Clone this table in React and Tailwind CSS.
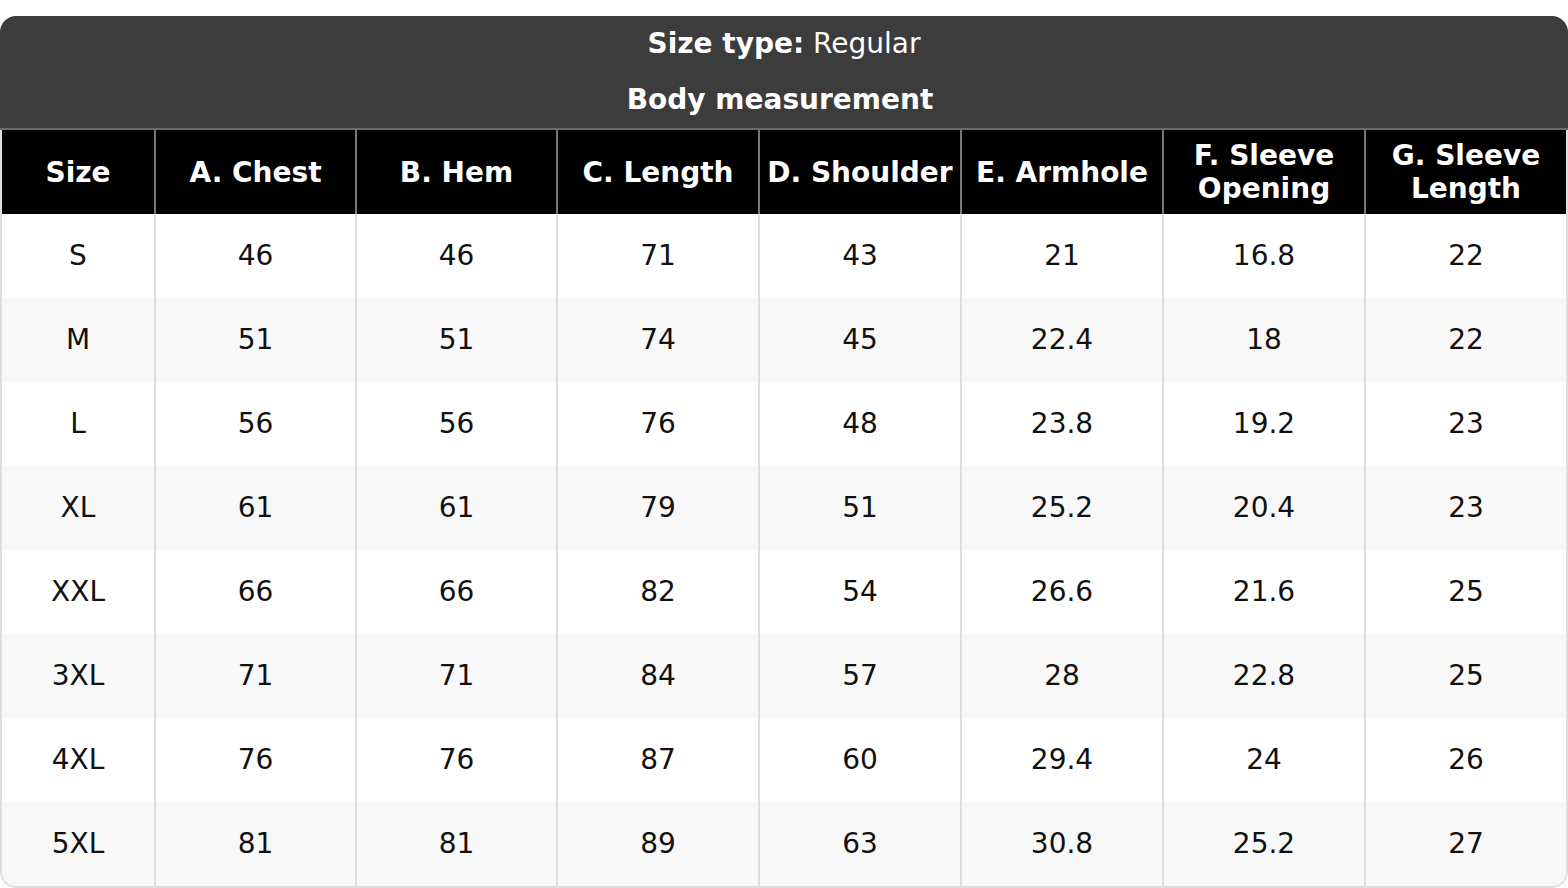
import React from "react";

const headers = [
  "Size",
  "A. Chest",
  "B. Hem",
  "C. Length",
  "D. Shoulder",
  "E. Armhole",
  ["F. Sleeve", "Opening"],
  ["G. Sleeve", "Length"],
];

const rows = [
  ["S", "46", "46", "71", "43", "21", "16.8", "22"],
  ["M", "51", "51", "74", "45", "22.4", "18", "22"],
  ["L", "56", "56", "76", "48", "23.8", "19.2", "23"],
  ["XL", "61", "61", "79", "51", "25.2", "20.4", "23"],
  ["XXL", "66", "66", "82", "54", "26.6", "21.6", "25"],
  ["3XL", "71", "71", "84", "57", "28", "22.8", "25"],
  ["4XL", "76", "76", "87", "60", "29.4", "24", "26"],
  ["5XL", "81", "81", "89", "63", "30.8", "25.2", "27"],
];

const grid = "grid grid-cols-[152px_201px_201px_202px_202px_202px_202px_1fr]";

export default function App() {
  return (
    <div className="w-[1568px] h-[888px] bg-white pt-[16px] font-['DejaVu_Sans',sans-serif]">
      <div className="rounded-[16px] overflow-hidden">
        <div className="bg-[#3c3c3c] text-white text-[28px] leading-[34px] border-b-2 border-[#6a6a6a]">
          <div className="h-[56px] flex items-center justify-center">
            <span className="font-bold">Size type:</span>
            <span>&nbsp;Regular</span>
          </div>
          <div className="h-[56px] flex items-center justify-center font-bold pr-[8px]">
            Body measurement
          </div>
        </div>
        <div className="border-x-2 border-b-2 border-[#dedede] rounded-b-[16px] overflow-hidden">
          <div className={`${grid} bg-black text-white font-bold text-[28px] leading-[33px] h-[84px]`}>
            {headers.map((h, i) => (
              <div
                key={i}
                className={`flex flex-col items-center justify-center text-center whitespace-nowrap ${
                  i > 0 ? "border-l-2 border-[#777]" : ""
                }`}
              >
                {Array.isArray(h) ? (
                  <>
                    <span>{h[0]}</span>
                    <span>{h[1]}</span>
                  </>
                ) : (
                  <span>{h}</span>
                )}
              </div>
            ))}
          </div>
          {rows.map((r, ri) => (
            <div
              key={ri}
              className={`${grid} h-[84px] text-[28px] text-[#111] ${
                ri % 2 === 1 ? "bg-[#f8f8f8]" : "bg-white"
              }`}
            >
              {r.map((c, ci) => (
                <div
                  key={ci}
                  className={`flex items-center justify-center ${
                    ci > 0 ? "border-l-2 border-[#dedede]" : ""
                  }`}
                >
                  {c}
                </div>
              ))}
            </div>
          ))}
        </div>
      </div>
    </div>
  );
}
